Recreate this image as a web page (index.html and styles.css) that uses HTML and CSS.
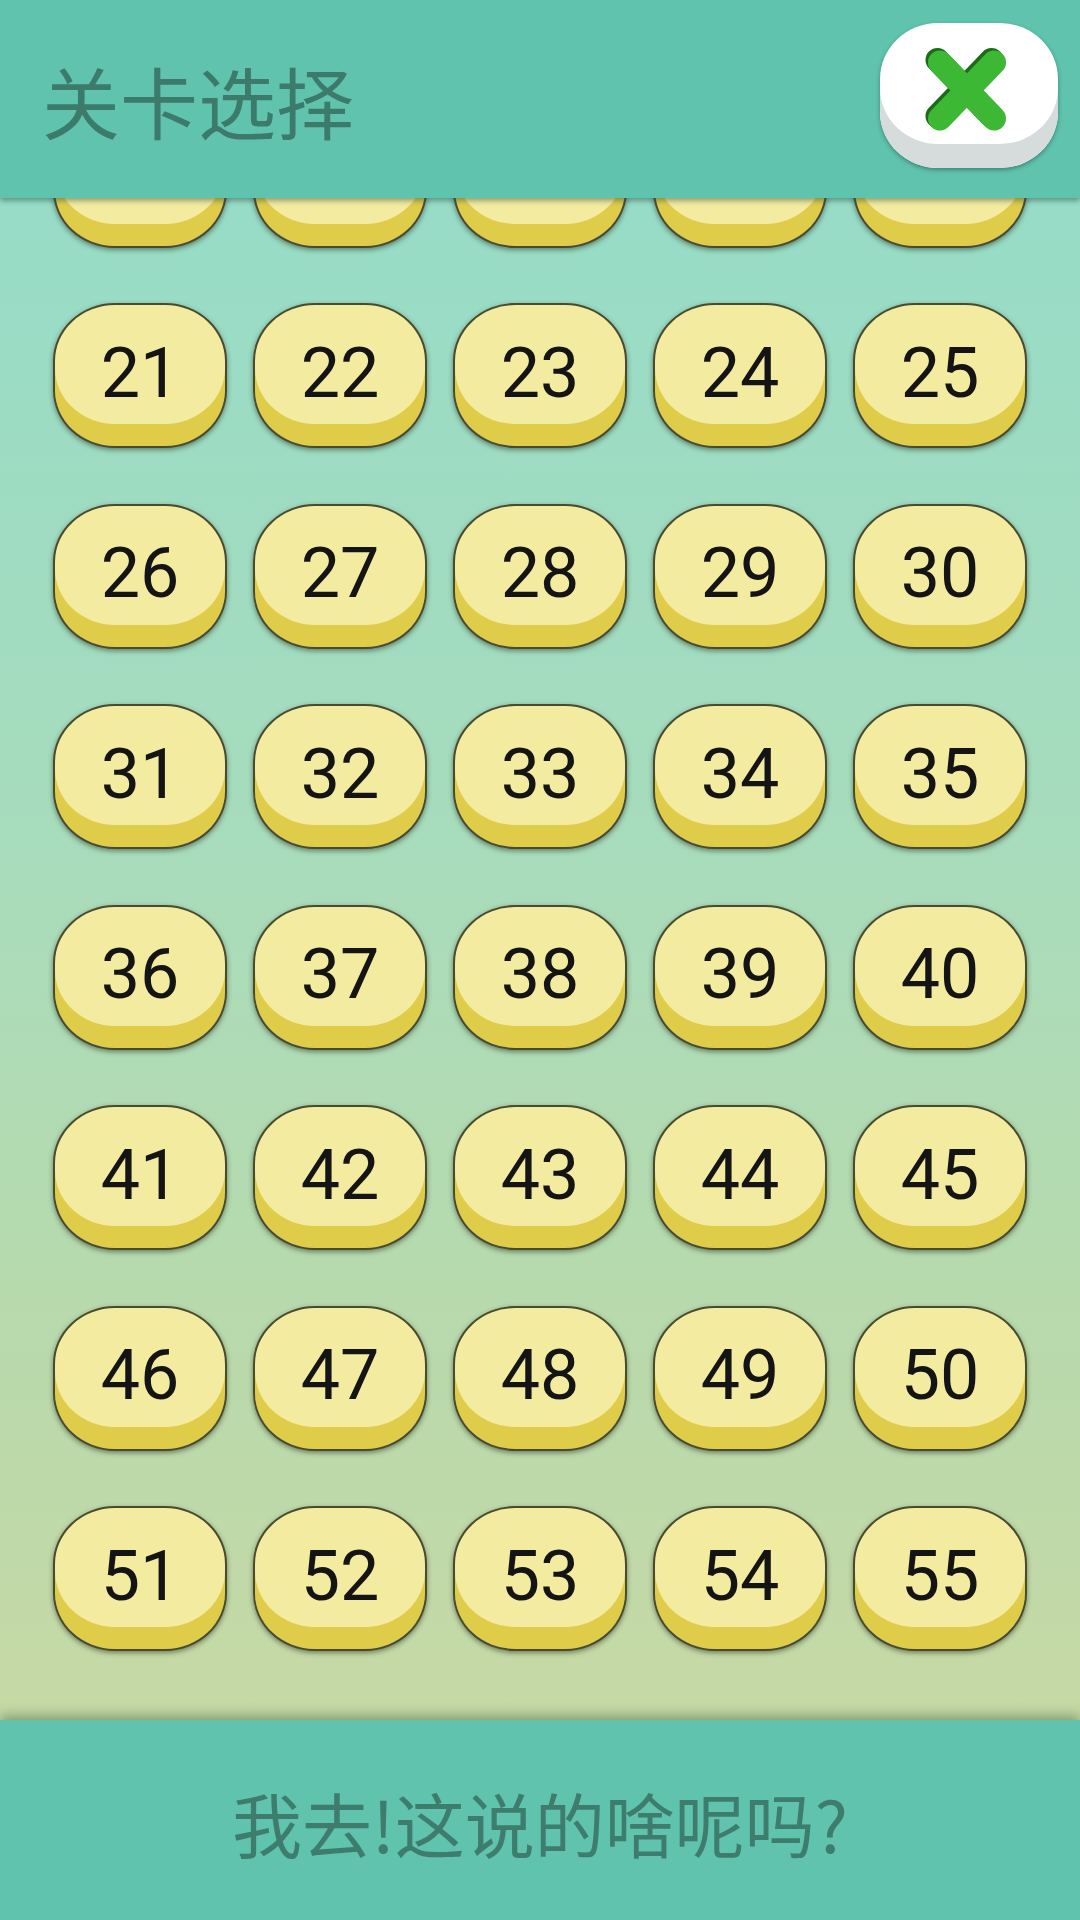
FILE: index.html
```html
<!DOCTYPE html>
<html lang="zh-CN">
<head>
<meta charset="utf-8">
<title>关卡选择</title>
<link rel="stylesheet" href="styles.css">
</head>
<body>
<div class="app">
  <header class="topbar">
    <h1 class="title">关卡选择</h1>
    <button class="close-btn" aria-label="关闭">
      <svg class="close-x" viewBox="0 0 84 86" width="84" height="86">
        <g stroke-linecap="round" stroke-width="24" fill="none">
          <path d="M14 14 L68 70 M68 14 L14 70" stroke="#1d6a1a" transform="translate(-1.5,-2)"/>
          <path d="M14 14 L68 70 M68 14 L14 70" stroke="#3cb834" transform="translate(1,0.5)"/>
        </g>
      </svg>
    </button>
  </header>
  <main class="levels">
    <div class="grid">
      <button class="lvl">16</button><button class="lvl">17</button><button class="lvl">18</button><button class="lvl">19</button><button class="lvl">20</button>
      <button class="lvl">21</button><button class="lvl">22</button><button class="lvl">23</button><button class="lvl">24</button><button class="lvl">25</button>
      <button class="lvl">26</button><button class="lvl">27</button><button class="lvl">28</button><button class="lvl">29</button><button class="lvl">30</button>
      <button class="lvl">31</button><button class="lvl">32</button><button class="lvl">33</button><button class="lvl">34</button><button class="lvl">35</button>
      <button class="lvl">36</button><button class="lvl">37</button><button class="lvl">38</button><button class="lvl">39</button><button class="lvl">40</button>
      <button class="lvl">41</button><button class="lvl">42</button><button class="lvl">43</button><button class="lvl">44</button><button class="lvl">45</button>
      <button class="lvl">46</button><button class="lvl">47</button><button class="lvl">48</button><button class="lvl">49</button><button class="lvl">50</button>
      <button class="lvl">51</button><button class="lvl">52</button><button class="lvl">53</button><button class="lvl">54</button><button class="lvl">55</button>
    </div>
  </main>
  <footer class="bottombar">
    <p class="hint">我去!这说的啥呢吗?</p>
  </footer>
</div>
</body>
</html>
```

FILE: styles.css
```css
* { box-sizing: border-box; }
html, body {
  margin: 0;
  padding: 0;
  width: 1080px;
  height: 1920px;
  overflow: hidden;
  font-family: "Noto Sans CJK SC", "Noto Sans", sans-serif;
}
.app {
  width: 1080px;
  height: 1920px;
  display: flex;
  flex-direction: column;
}
.topbar {
  height: 198px;
  flex: 0 0 198px;
  background: #60c3ad;
  display: flex;
  align-items: flex-start;
  justify-content: space-between;
  padding: 0 22px 0 42px;
  position: relative;
  z-index: 2;
  box-shadow: 0 3px 5px rgba(30, 70, 60, 0.45);
}
.title {
  margin: 0;
  padding-top: 56px;
  font-family: "Noto Sans CJK SC", sans-serif;
  font-weight: 400;
  font-size: 78px;
  line-height: 88px;
  color: #3c7b6b;
  letter-spacing: 0;
}
.close-btn {
  margin-top: 23px;
  width: 178px;
  height: 145px;
  border: none;
  padding: 0 0 14px 0;
  border-radius: 58px / 56px;
  background: #ffffff;
  box-shadow: inset 0 -24px 0 #d6dbdb, 0 2px 4px rgba(20, 60, 50, 0.45);
  display: flex;
  align-items: center;
  justify-content: center;
}
.close-x { display: block; margin-left: -4px; margin-top: 4px; }
.levels {
  flex: 1 1 auto;
  overflow: hidden;
  background: linear-gradient(to bottom, #97dcc7 0%, #a6dcbd 40%, #b6daae 70%, #c6d9a5 100%);
  position: relative;
  z-index: 1;
}
.grid {
  margin-top: -95.5px;
  padding: 0 53px;
  display: grid;
  grid-template-columns: repeat(5, 174px);
  grid-auto-rows: 145px;
  column-gap: 26px;
  row-gap: 55.5px;
}
.lvl {
  width: 174px;
  height: 145px;
  border: 2px solid #4a4a30;
  border-radius: 62px / 58px;
  background: #f3eca0;
  box-shadow: inset 0 -22px 0 #dfcd4a, 0 2px 5px rgba(30, 40, 20, 0.5);
  font-family: Roboto, "Noto Sans", sans-serif;
  font-size: 70px;
  line-height: 1;
  color: #141414;
  padding: 0 0 6px 0;
  display: flex;
  align-items: center;
  justify-content: center;
}
.bottombar {
  height: 200px;
  flex: 0 0 200px;
  background: #5fc3ad;
  display: flex;
  align-items: center;
  justify-content: center;
  position: relative;
  z-index: 2;
  box-shadow: 0 -4px 12px rgba(40, 80, 50, 0.45);
}
.hint {
  margin: 0;
  padding-top: 6px;
  font-family: "Noto Sans CJK SC", sans-serif;
  font-size: 70px;
  line-height: 1;
  color: #3e7c6d;
}
```
